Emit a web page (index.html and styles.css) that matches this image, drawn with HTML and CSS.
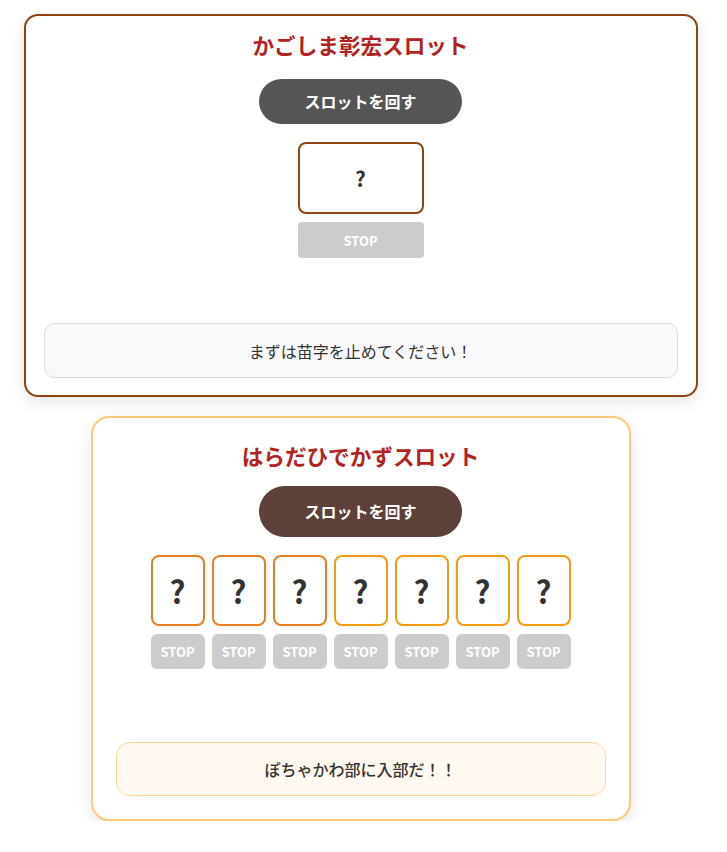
FILE: index.html
```html
<!DOCTYPE html>
<html lang="ja">
<head>
<meta charset="utf-8">
<title>スロット</title>
<link rel="stylesheet" href="styles.css">
</head>
<body>
<div class="page">
  <section class="card card-main">
    <h2 class="title">かごしま彰宏スロット</h2>
    <button class="spin spin-main">スロットを回す</button>
    <div class="reels reels-main">
      <div class="reel">
        <div class="box box-main">?</div>
        <button class="stop stop-main">STOP</button>
      </div>
    </div>
    <div class="message message-main">まずは苗字を止めてください！</div>
  </section>

  <section class="card card-sub">
    <h2 class="title">はらだひでかずスロット</h2>
    <button class="spin spin-sub">スロットを回す</button>
    <div class="reels reels-sub">
      <div class="reel"><div class="box box-sub box-last">?</div><button class="stop stop-sub">STOP</button></div>
      <div class="reel"><div class="box box-sub box-last">?</div><button class="stop stop-sub">STOP</button></div>
      <div class="reel"><div class="box box-sub box-last">?</div><button class="stop stop-sub">STOP</button></div>
      <div class="reel"><div class="box box-sub box-first">?</div><button class="stop stop-sub">STOP</button></div>
      <div class="reel"><div class="box box-sub box-first">?</div><button class="stop stop-sub">STOP</button></div>
      <div class="reel"><div class="box box-sub box-first">?</div><button class="stop stop-sub">STOP</button></div>
      <div class="reel"><div class="box box-sub box-first">?</div><button class="stop stop-sub">STOP</button></div>
    </div>
    <div class="message message-sub">ぽちゃかわ部に入部だ！！</div>
  </section>
</div>
</body>
</html>
```

FILE: styles.css
```css
* { box-sizing: border-box; }

html, body {
  margin: 0;
  padding: 0;
  background: #ffffff;
  font-family: "Noto Sans CJK JP", "Noto Sans", sans-serif;
  color: #333333;
}

.page {
  width: 721px;
  display: flex;
  flex-direction: column;
  align-items: center;
  padding-top: 14px;
  gap: 19px;
}

.card {
  background: #ffffff;
  display: flex;
  flex-direction: column;
  align-items: center;
  box-shadow: 0 5px 15px rgba(0, 0, 0, 0.1);
}

.card-main {
  width: 674px;
  border: 2px solid #8b4513;
  border-radius: 14px;
  padding: 14px 18px 17px;
}

.card-sub {
  width: 540px;
  border: 2px solid #ffc87a;
  border-radius: 18px;
  padding: 23px 23px 23px;
}

.title {
  margin: 0;
  font-size: 21.6px;
  line-height: 30px;
  font-weight: 700;
  color: #b22222;
}

.spin {
  border: none;
  color: #ffffff;
  font-family: inherit;
  font-weight: 700;
  font-size: 16px;
  line-height: 21px;
  border-radius: 30px;
  width: 203px;
  padding: 0;
}

.spin-main {
  margin-top: 19px;
  height: 45px;
  background: #555555;
}

.spin-sub {
  margin-top: 15px;
  height: 51px;
  background: #5d4037;
}

.reels {
  display: flex;
  justify-content: center;
}

.reels-main { margin-top: 18px; }
.reels-sub { margin-top: 18px; gap: 7px; }

.reel {
  display: flex;
  flex-direction: column;
  align-items: center;
  gap: 8px;
}

.box {
  display: flex;
  align-items: center;
  justify-content: center;
  font-weight: 700;
  background: #ffffff;
}

.box-main {
  width: 126px;
  height: 72px;
  border: 2px solid #8b4513;
  border-radius: 8px;
  font-size: 21px;
}

.box-sub {
  width: 54px;
  height: 71px;
  border-radius: 8px;
  font-size: 31px;
}

.box-last { border: 2px solid #e67e22; }
.box-first { border: 2px solid #f39c12; }

.stop {
  border: none;
  background: #cccccc;
  color: #ffffff;
  font-family: inherit;
  font-weight: 700;
  padding: 0;
}

.stop-main {
  width: 126px;
  height: 36px;
  border-radius: 4px;
  font-size: 13px;
}

.stop-sub {
  width: 54px;
  height: 35px;
  border-radius: 6px;
  font-size: 13px;
}

.message {
  align-self: stretch;
  display: flex;
  align-items: center;
  justify-content: center;
  font-size: 16px;
}

.message-main {
  margin-top: 65px;
  height: 55px;
  background: #f9f9f9;
  border: 1px solid #dddddd;
  border-radius: 10px;
  font-weight: 400;
}

.message-sub {
  margin-top: 73px;
  height: 54px;
  background: #fff9f2;
  border: 1px solid #ffd591;
  border-radius: 14px;
  font-weight: 500;
}
```
